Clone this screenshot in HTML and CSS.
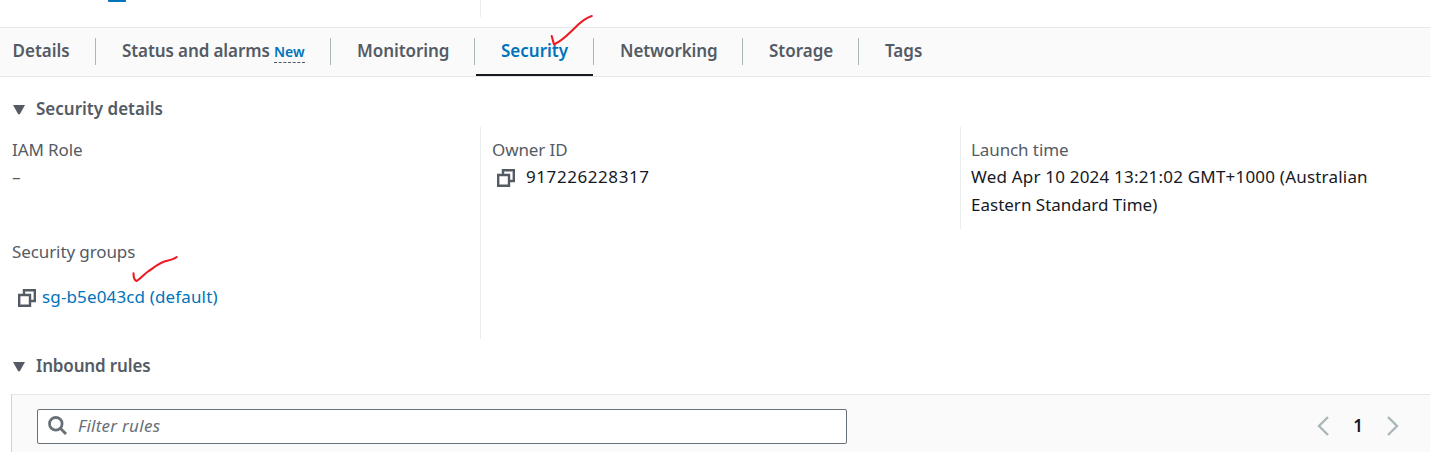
FILE: index.html
```html
<!DOCTYPE html>
<html lang="en">
<head>
<meta charset="utf-8">
<title>Instance details</title>
<link rel="stylesheet" href="styles.css">
</head>
<body>
<div class="summary"><div class="summary-col"><span class="summary-mark"></span></div></div>

<nav class="tabs">
  <a class="tab tab-details">Details</a>
  <a class="tab tab-status">Status and alarms <span class="new">New</span></a>
  <a class="tab tab-monitoring">Monitoring</a>
  <a class="tab tab-security active">Security
    <svg class="tick tick-tab" width="46" height="34" viewBox="0 0 46 34"><path d="M4.700 22 L7 30.500 C13 27.500 18 23.500 23 18.500 C30 12 35 5 44.800 2"/></svg>
  </a>
  <a class="tab tab-networking">Networking</a>
  <a class="tab tab-storage">Storage</a>
  <a class="tab tab-tags">Tags</a>
</nav>

<section class="details">
  <h2 class="heading"><svg class="caret" width="14" height="11" viewBox="0 0 14 11"><path d="M1 .9H13L7.800 10.200H6.200Z"/></svg>Security details</h2>
  <div class="columns">
    <div class="col col-first">
      <div class="label">IAM Role</div>
      <div class="value dash">–</div>
      <div class="label groups-label">Security groups</div>
      <div class="group-row">
        <svg class="copy" width="18" height="18" viewBox="0 0 18 18"><path d="M1.200 6H12V16.800H1.200ZM6 6V1.200H16.800V12H12"/></svg>
        <a class="link">sg-b5e043cd (default)</a>
        <svg class="tick tick-group" width="48" height="30" viewBox="0 0 48 30"><path d="M2.500 18.200 C2.500 22 3 25 5.500 26 C9 24.500 12 20 17 16.500 C23 12.500 28 8 34 6.200 C38 5.200 42 4.800 45.700 2"/></svg>
      </div>
    </div>
    <div class="col col-owner">
      <div class="label">Owner ID</div>
      <div class="value owner-row">
        <svg class="copy" width="18" height="18" viewBox="0 0 18 18"><path d="M1.200 6H12V16.800H1.200ZM6 6V1.200H16.800V12H12"/></svg>
        <span class="owner-id">917226228317</span>
      </div>
    </div>
    <div class="col col-launch">
      <div class="label">Launch time</div>
      <div class="value"><span class="launch-date">Wed Apr 10 2024 13:21:02 GMT+1000 (Australian</span><br>Eastern Standard Time)</div>
    </div>
  </div>
</section>

<section class="inbound">
  <h2 class="heading heading-inbound"><svg class="caret" width="14" height="11" viewBox="0 0 14 11"><path d="M1 .9H13L7.800 10.200H6.200Z"/></svg>Inbound rules</h2>
  <div class="table">
    <div class="search">
      <svg class="glass" width="20" height="20" viewBox="0 0 20 20"><circle cx="7.800" cy="7.800" r="6.300"/><path d="M12.300 12.300L18 18"/></svg>
      <span class="placeholder">Filter rules</span>
    </div>
    <div class="pager">
      <svg class="arrow" width="12" height="20" viewBox="0 0 12 20"><path d="M11 1L2 10L11 19"/></svg>
      <span class="page">1</span>
      <svg class="arrow" width="12" height="20" viewBox="0 0 12 20"><path d="M1 1L10 10L1 19"/></svg>
    </div>
  </div>
</section>
</body>
</html>
```
FILE: styles.css
```css
* { box-sizing: border-box; }
body {
  margin: 0;
  height: 452px;
  overflow: hidden;
  background: #fff;
  color: #16191f;
  font: 400 17px/28px "Noto Sans", "Open Sans", sans-serif;
}
svg { flex: none; fill: none; display: block; }

.summary { height: 27px; }
.summary-col { width: 481px; height: 17px; border-right: 1px solid #eaeded; padding-left: 108px; }
.summary-mark { display: block; width: 18px; height: 2px; background: #0073bb; border-radius: 0 0 1px 1px; }

.tabs {
  display: flex;
  height: 50px;
  background: #fafafa;
  border-top: 1px solid #e6e8e8;
  border-bottom: 1px solid #e6e8e8;
}
.tab {
  position: relative;
  height: 48px;
  padding: 9px 0 0 26px;
  color: #545b64;
  font-weight: 600;
  white-space: nowrap;
}
.tab::after {
  content: "";
  position: absolute;
  right: 0;
  top: 10px;
  width: 1px;
  height: 27px;
  background: #aab7b8;
}
.tab-details { width: 96px; padding-left: 12.5px; }
.tab-status { width: 235px; letter-spacing: -.1px; }
.tab-monitoring { width: 144px; letter-spacing: -.06px; }
.tab-security { width: 119px; }
.tab-networking { width: 149px; letter-spacing: -.1px; }
.tab-storage { width: 116px; }
.tab-tags::after { display: none; }
.active { color: #0073bb; }
.active::before {
  content: "";
  position: absolute;
  left: 1px;
  right: 1px;
  bottom: 0;
  height: 2px;
  background: #16191f;
}
.new {
  display: inline-block;
  height: 21px;
  line-height: 20px;
  font-size: 14px;
  letter-spacing: 0;
  color: #0073bb;
  border-bottom: 1px dashed #545b64;
}
.tick { position: absolute; stroke: #ec1c24; stroke-width: 2.1; stroke-linecap: round; stroke-linejoin: round; z-index: 2; }
.tick-tab { left: 72px; top: -14px; overflow: visible; }
.tick-group { left: 119px; top: -28px; overflow: visible; }

.heading {
  display: flex;
  align-items: center;
  gap: 10px;
  margin: 0;
  padding-left: 12px;
  height: 28px;
  font-size: 17px;
  font-weight: 600;
  color: #545b64;
}
.heading-inbound { letter-spacing: -.15px; }
.caret { fill: #545b64; }

.details { padding-top: 18px; height: 275px; }
.columns { display: flex; align-items: flex-start; margin-top: 4px; }
.col { padding-top: 9px; }
.col-first { width: 481px; height: 212px; border-right: 1px solid #eaeded; padding-left: 12px; }
.col-owner { width: 480px; height: 102px; border-right: 1px solid #eaeded; padding-left: 11px; }
.col-launch { padding-left: 10px; }
.label { color: #545b64; height: 27px; letter-spacing: -.1px; }
.value { min-height: 28px; }
.dash { color: #545b64; }
.groups-label { margin-top: 47px; }
.group-row { position: relative; display: flex; align-items: center; gap: 6px; margin-top: 18px; padding-left: 6px; }
.copy { stroke: #545b64; stroke-width: 2.4; position: relative; top: 1px; }
.link { color: #0073bb; letter-spacing: .14px; }
.owner-row { display: flex; align-items: center; gap: 11px; padding-left: 5px; }
.owner-id { letter-spacing: .57px; }
.launch-date { letter-spacing: .2px; }

.table {
  display: flex;
  justify-content: space-between;
  align-items: flex-start;
  height: 72px;
  margin: 14px 0 0 11px;
  padding: 14px 31px 0 25px;
  background: #fafafa;
  border-top: 1px solid #e6e8e8;
  border-left: 1px solid #d0d5d5;
}
.search {
  display: flex;
  align-items: center;
  gap: 10px;
  width: 810px;
  height: 35px;
  padding: 0 0 1px 10px;
  background: #fff;
  border: 1px solid #687078;
  border-radius: 2px;
}
.glass { stroke: #687078; stroke-width: 2.8; }
.placeholder { font-style: italic; letter-spacing: .27px; color: #687078; }
.pager { display: flex; align-items: center; height: 34px; gap: 24px; }
.arrow { stroke: #aab7b8; stroke-width: 2.4; }
.page { font-weight: 600; }
```
